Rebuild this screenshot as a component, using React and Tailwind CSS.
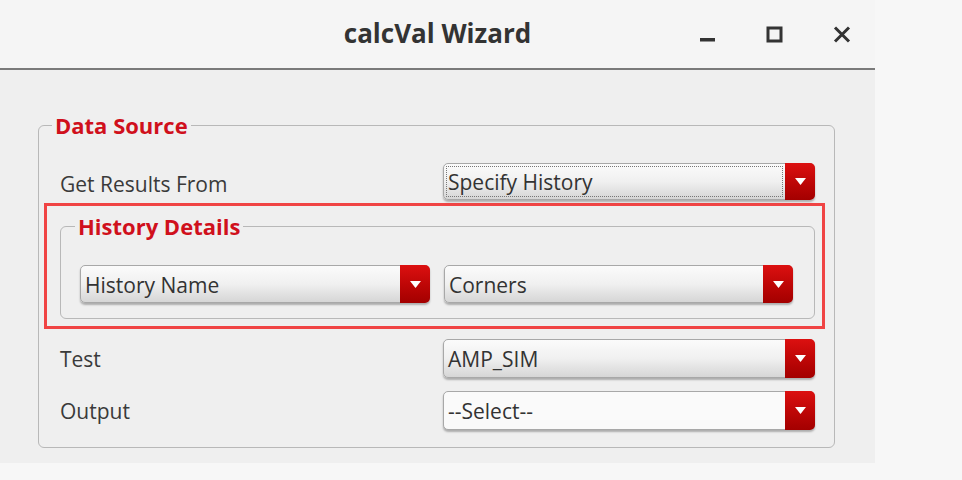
import React from "react";

const font = { fontFamily: '"Open Sans", "DejaVu Sans", sans-serif' };

function Caret() {
  return (
    <svg width="11" height="7" viewBox="0 0 11 7">
      <path d="M0 0 H11 L5.5 7 Z" fill="#fff" />
    </svg>
  );
}

function Select({ value, width, height = 38, plain = false, focused = false }) {
  return (
    <div
      className={`flex rounded-[5px] border border-[#a8a8a8] shadow-[0_2px_2px_rgba(0,0,0,0.28)] ${
        plain ? "bg-[#fafafa]" : "bg-gradient-to-b from-[#fbfbfb] via-[#f0f0f0] to-[#d6d6d6]"
      }`}
      style={{ width, height }}
    >
      <div className="flex-1 flex items-stretch p-[2px]">
        <div
          className={`flex-1 flex items-center pl-[1px] pt-[2px] text-[21px] leading-none text-[#333] ${
            focused ? "border border-dotted border-[#777]" : "border border-transparent"
          }`}
        >
          {value}
        </div>
      </div>
      <div className="w-[30px] -my-px -mr-px rounded-r-[5px] bg-gradient-to-b from-[#dc1010] to-[#a30000] flex items-center justify-center">
        <Caret />
      </div>
    </div>
  );
}

export default function App() {
  return (
    <div className="w-[962px] h-[480px] bg-[#f7f7f7]" style={font}>
      <div className="w-[875px] h-[463px] bg-[#efefef]">
        <div className="h-[70px] bg-[#f5f5f5] border-b-2 border-[#7a7a7a] flex items-center relative">
          <div className="flex-1 text-center text-[26px] leading-none font-bold text-[#333] pb-[2px]">calcVal Wizard</div>
          <div className="absolute right-[24px] top-[26px] flex items-start gap-[50px]">
            <svg width="17" height="17" viewBox="0 0 17 17">
              <rect x="1" y="12" width="15" height="3.5" fill="#333" />
            </svg>
            <svg width="17" height="17" viewBox="0 0 17 17">
              <rect x="2" y="2" width="13" height="13" fill="none" stroke="#333" strokeWidth="3" />
            </svg>
            <svg width="18" height="17" viewBox="0 0 18 17">
              <path d="M2 1.5 L16 15.5 M16 1.5 L2 15.5" stroke="#333" strokeWidth="3" />
            </svg>
          </div>
        </div>

        <fieldset className="ml-[38px] mt-[43px] w-[797px] border border-[#b8b8b8] rounded-[6px] pb-[17px]">
          <legend className="ml-[13px] px-[3px] text-[22px] leading-[24px] font-bold text-[#d0101c]">Data Source</legend>

          <div className="mt-[26px] h-[37px] flex items-center pl-[21px] pr-[19px]">
            <div className="flex-1 text-[21px] leading-none text-[#3a3a3a] pt-[5px]">Get Results From</div>
            <Select value="Specify History" width={372} height={37} focused />
          </div>

          <div className="mt-[3px] ml-[5px] w-[781px] border-[3px] border-[#f04444] pb-[7px]">
            <fieldset className="ml-[13px] mt-[8px] w-[755px] border border-[#b8b8b8] rounded-[6px] pb-[15px]">
              <legend className="ml-[14px] px-[3px] text-[22px] leading-[24px] font-bold text-[#d0101c]">History Details</legend>
              <div className="mt-[27px] ml-[19px] flex gap-[14px]">
                <Select value="History Name" width={350} />
                <Select value="Corners" width={349} />
              </div>
            </fieldset>
          </div>

          <div className="mt-[10px] h-[39px] flex items-center pl-[21px] pr-[19px]">
            <div className="flex-1 text-[21px] leading-none text-[#3a3a3a] pt-[2px]">Test</div>
            <Select value="AMP_SIM" width={372} height={39} />
          </div>

          <div className="mt-[13px] h-[39px] flex items-center pl-[21px] pr-[19px]">
            <div className="flex-1 text-[21px] leading-none text-[#3a3a3a] pt-[2px]">Output</div>
            <Select value="--Select--" width={372} height={39} plain />
          </div>
        </fieldset>
      </div>
    </div>
  );
}
